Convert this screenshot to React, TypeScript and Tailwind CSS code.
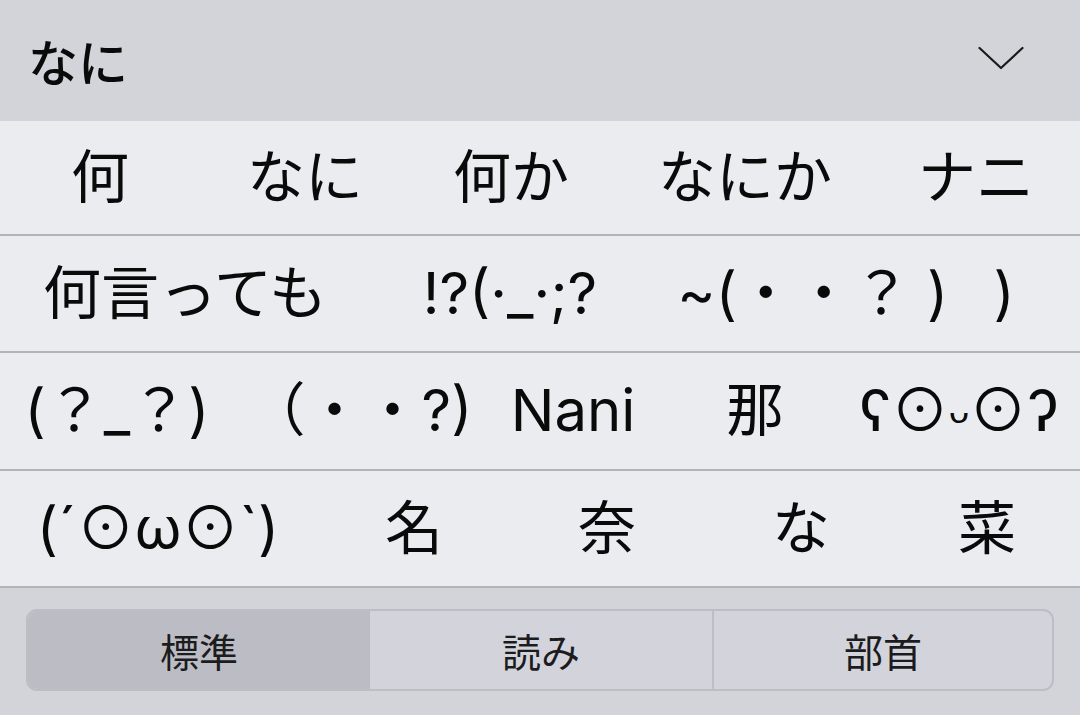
import React from "react";

type Cell = { t: React.ReactNode; w: string };

const rows: { h: string; cells: Cell[] }[] = [
  {
    h: "h-[115px]",
    cells: [
      { t: "何", w: "w-[200px]" },
      { t: "なに", w: "w-[210px]" },
      { t: "何か", w: "w-[202px]" },
      { t: "なにか", w: "w-[266px]" },
      { t: "ナニ", w: "w-[196px]" },
    ],
  },
  {
    h: "h-[117px]",
    cells: [
      { t: "何言っても", w: "w-[370px]" },
      { t: "!?(·_·;?", w: "w-[280px]" },
      { t: "~(・・？ ) \u2002)", w: "w-[392px]" },
    ],
  },
  {
    h: "h-[118px]",
    cells: [
      { t: "(？_？)", w: "w-[234px]" },
      { t: "（・・?)", w: "w-[252px]" },
      { t: "Nani", w: "w-[174px]" },
      { t: "那", w: "w-[190px]" },
      {
        t: (
          <>
            ʕ⊙<span className="text-[36px] align-[-14px]">ᴗ</span>⊙ʔ
          </>
        ),
        w: "w-[218px]",
      },
    ],
  },
  {
    h: "h-[117px]",
    cells: [
      { t: "(´⊙ω⊙`)", w: "w-[316px]" },
      { t: "名", w: "w-[196px]" },
      { t: "奈", w: "w-[190px]" },
      { t: "な", w: "w-[198px]" },
      { t: "菜", w: "w-[174px]" },
    ],
  },
];

const font = "font-['Inter','Noto_Sans_CJK_JP',sans-serif]";

export default function App() {
  return (
    <div className={`w-[1080px] h-[715px] overflow-hidden flex flex-col bg-[#ebecf0] text-[#0a0a0a] ${font}`}>
      <div className="h-[121px] shrink-0 bg-[#d2d4d9] flex items-center justify-between pl-[28px] pr-[56px]">
        <span className="text-[50px] font-medium leading-none font-['Noto_Sans_CJK_JP',sans-serif] -mt-[2px]">なに</span>
        <svg width="46" height="24" viewBox="0 0 46 24" className="-mt-[6px]">
          <path d="M1.5 2 L23 22 L44.5 2" fill="none" stroke="#1a1a1a" strokeWidth="2.2" strokeLinecap="round" strokeLinejoin="round" />
        </svg>
      </div>
      {rows.map((r, i) => (
        <div key={i} className={`${r.h} shrink-0 flex items-center border-b-2 border-[#b3b4b9] bg-[#ebecf0]`}>
          {r.cells.map((c, j) => (
            <div key={j} className={`${c.w} shrink-0 flex justify-center items-center text-[58px] leading-[1.1] whitespace-pre`}>
              {c.t}
            </div>
          ))}
        </div>
      ))}
      <div className="flex-1 bg-[#d2d4d9] px-[26px] pt-[21px]">
        <div className="h-[82px] flex rounded-[11px] border-2 border-[#bdbec4] overflow-hidden bg-[#d3d4db] font-['Noto_Sans_CJK_JP',sans-serif] text-[39px] text-[#1c1c1e]">
          <div className="w-[342px] shrink-0 bg-[#bcbdc4] flex items-center justify-center">標準</div>
          <div className="w-[344px] shrink-0 flex items-center justify-center border-r-2 border-[#bdbec4]">読み</div>
          <div className="flex-1 flex items-center justify-center">部首</div>
        </div>
      </div>
    </div>
  );
}
